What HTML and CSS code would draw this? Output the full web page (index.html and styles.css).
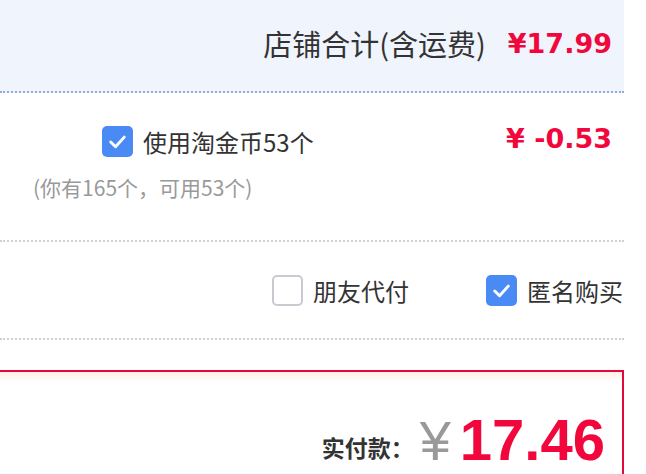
FILE: index.html
```html
<!DOCTYPE html>
<html lang="zh-CN">
<head>
    <meta charset="UTF-8">
    <meta name="viewport" content="width=device-width, initial-scale=1.0">
    <title>确认订单</title>
    <link rel="stylesheet" href="styles.css">
</head>
<body>
    <div class="order">
        <div class="shop-total">
            <span class="label">店铺合计(含运费)</span>
            <span class="price">¥17.99</span>
        </div>

        <div class="coin-row">
            <div class="coin-left">
                <label class="check-line">
                    <span class="box checked">
                        <svg viewBox="0 0 32 32" width="31" height="31"><path d="M9 16.5l5 5 9-10" fill="none" stroke="#fff" stroke-width="3" stroke-linecap="round" stroke-linejoin="round"/></svg>
                    </span>
                    <span class="check-text">使用淘金币53个</span>
                </label>
                <p class="note">(你有165个，可用53个)</p>
            </div>
            <span class="price">¥ -0.53</span>
        </div>

        <div class="options">
            <label class="check-line">
                <span class="box"></span>
                <span class="check-text">朋友代付</span>
            </label>
            <label class="check-line">
                <span class="box checked">
                    <svg viewBox="0 0 32 32" width="31" height="31"><path d="M9 16.5l5 5 9-10" fill="none" stroke="#fff" stroke-width="3" stroke-linecap="round" stroke-linejoin="round"/></svg>
                </span>
                <span class="check-text">匿名购买</span>
            </label>
        </div>
    </div>

    <div class="pay-box">
        <span class="pay-label">实付款：</span><span class="pay-yen">¥</span><span class="pay-amount">17.46</span>
    </div>
</body>
</html>
```

FILE: styles.css
```css
* {
    margin: 0;
    padding: 0;
    box-sizing: border-box;
}

body {
    font-family: "Noto Sans CJK SC", "Noto Sans", sans-serif;
    color: #333;
    background-color: #fff;
    overflow: hidden;
}

.order {
    width: 624px;
}

.price {
    font-family: "DejaVu Sans", sans-serif;
    font-weight: bold;
    font-size: 27px;
    color: #f1073c;
    white-space: pre;
}


.shop-total {
    height: 93px;
    background-color: #eff4fd;
    border-bottom: 2px dotted #8eaee0;
    display: flex;
    justify-content: flex-end;
    align-items: center;
    gap: 22px;
    padding: 0 12px 5px 0;
}

.shop-total .label {
    font-size: 29px;
}


.coin-row {
    height: 149px;
    border-bottom: 2px dotted #d0d0d0;
    display: flex;
    justify-content: space-between;
    align-items: flex-start;
    padding: 33px 12px 0 33px;
}

.coin-row .check-line {
    margin-left: 69px;
}

.coin-row .price {
    line-height: 31px;
    margin-top: -3px;
}

.note {
    font-size: 21px;
    color: #999;
    margin-top: 15px;
}


.check-line {
    display: flex;
    align-items: center;
    gap: 10px;
}

.check-text {
    font-size: 24px;
    line-height: 31px;
}

.box {
    width: 31px;
    height: 31px;
    border: 2px solid #c9c9d2;
    border-radius: 5px;
    display: flex;
}

.box.checked {
    background-color: #4a8af4;
    border: none;
}


.options {
    height: 98px;
    border-bottom: 2px dotted #d0d0d0;
    display: flex;
    justify-content: flex-end;
    align-items: center;
    gap: 77px;
    padding-right: 1px;
}


.pay-box {
    width: 626px;
    height: 140px;
    margin: 30px 0 0 -2px;
    border: 2px solid #e4093b;
    background: linear-gradient(#fff0ea, #fff 10px);
    text-align: right;
    line-height: 64px;
    padding: 36px 17px 0 0;
}

.pay-label {
    font-size: 23px;
    font-weight: bold;
    color: #333;
    vertical-align: 3px;
    margin-right: 6px;
}

.pay-yen {
    font-family: "Liberation Sans", sans-serif;
    font-size: 56px;
    color: #999;
    margin-right: 9px;
}

.pay-amount {
    font-family: "Liberation Sans", sans-serif;
    font-size: 58px;
    font-weight: bold;
    color: #f1073c;
}
```
